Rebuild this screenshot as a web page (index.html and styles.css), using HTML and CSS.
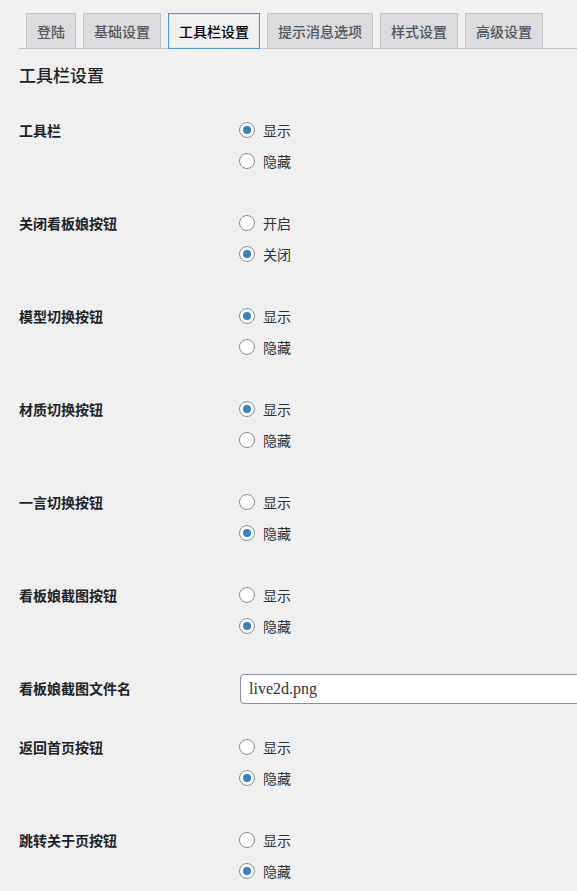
FILE: index.html
```html
<!DOCTYPE html>
<html lang="zh-CN">
<head>
    <meta charset="UTF-8">
    <meta name="viewport" content="width=device-width, initial-scale=1.0">
    <title>工具栏设置</title>
    <link rel="stylesheet" href="styles.css">
</head>
<body>
    <div class="wrap">
        <nav class="nav-tabs">
            <a href="#" class="nav-tab">登陆</a>
            <a href="#" class="nav-tab">基础设置</a>
            <a href="#" class="nav-tab nav-tab-active">工具栏设置</a>
            <a href="#" class="nav-tab">提示消息选项</a>
            <a href="#" class="nav-tab">样式设置</a>
            <a href="#" class="nav-tab">高级设置</a>
        </nav>

        <h2 class="section-title">工具栏设置</h2>

        <form action="#" method="post" class="settings">
            <div class="row">
                <div class="row-label">工具栏</div>
                <div class="row-field">
                    <label class="option"><input type="radio" name="toolbar" checked><span>显示</span></label>
                    <label class="option"><input type="radio" name="toolbar"><span>隐藏</span></label>
                </div>
            </div>

            <div class="row">
                <div class="row-label">关闭看板娘按钮</div>
                <div class="row-field">
                    <label class="option"><input type="radio" name="close_btn"><span>开启</span></label>
                    <label class="option"><input type="radio" name="close_btn" checked><span>关闭</span></label>
                </div>
            </div>

            <div class="row">
                <div class="row-label">模型切换按钮</div>
                <div class="row-field">
                    <label class="option"><input type="radio" name="model_btn" checked><span>显示</span></label>
                    <label class="option"><input type="radio" name="model_btn"><span>隐藏</span></label>
                </div>
            </div>

            <div class="row">
                <div class="row-label">材质切换按钮</div>
                <div class="row-field">
                    <label class="option"><input type="radio" name="texture_btn" checked><span>显示</span></label>
                    <label class="option"><input type="radio" name="texture_btn"><span>隐藏</span></label>
                </div>
            </div>

            <div class="row">
                <div class="row-label">一言切换按钮</div>
                <div class="row-field">
                    <label class="option"><input type="radio" name="hitokoto_btn"><span>显示</span></label>
                    <label class="option"><input type="radio" name="hitokoto_btn" checked><span>隐藏</span></label>
                </div>
            </div>

            <div class="row">
                <div class="row-label">看板娘截图按钮</div>
                <div class="row-field">
                    <label class="option"><input type="radio" name="photo_btn"><span>显示</span></label>
                    <label class="option"><input type="radio" name="photo_btn" checked><span>隐藏</span></label>
                </div>
            </div>

            <div class="row">
                <div class="row-label">看板娘截图文件名</div>
                <div class="row-field row-field-text">
                    <input type="text" name="photo_name" class="regular-text" value="live2d.png">
                </div>
            </div>

            <div class="row">
                <div class="row-label">返回首页按钮</div>
                <div class="row-field">
                    <label class="option"><input type="radio" name="home_btn"><span>显示</span></label>
                    <label class="option"><input type="radio" name="home_btn" checked><span>隐藏</span></label>
                </div>
            </div>

            <div class="row">
                <div class="row-label">跳转关于页按钮</div>
                <div class="row-field">
                    <label class="option"><input type="radio" name="about_btn"><span>显示</span></label>
                    <label class="option"><input type="radio" name="about_btn" checked><span>隐藏</span></label>
                </div>
            </div>
        </form>
    </div>
</body>
</html>
```

FILE: styles.css
```css
html {
    overflow: hidden;
}

body {
    margin: 0;
    background: #f0f0f1;
    color: #1d2327;
    font-family: "Noto Sans CJK SC", "Noto Sans", sans-serif;
    font-size: 14px;
}

.wrap {
    padding: 13px 0 0 19px;
}

.nav-tabs {
    display: flex;
    border-bottom: 1px solid #c3c4c7;
}

.nav-tab {
    margin-left: 7px;
    margin-bottom: -1px;
    padding: 5px 10px;
    line-height: 24px;
    font-size: 14px;
    font-weight: 500;
    color: #50575e;
    text-decoration: none;
    background: #dcdcde;
    border: 1px solid #c3c4c7;
}

.nav-tab-active {
    background: #f0f0f1;
    color: #000;
    border-color: #4f94d4;
    box-shadow: inset 0 0 0 1px #dbe8f4;
}

.section-title {
    margin: 14px 0 0;
    font-size: 17px;
    line-height: 24px;
    font-weight: 500;
    color: #1d2327;
}

.settings {
    margin-top: 12px;
}

.row {
    display: flex;
    align-items: flex-start;
}

.row-label {
    width: 220px;
    flex-shrink: 0;
    padding-top: 21px;
    line-height: 20px;
    font-weight: 600;
    color: #1d2327;
}

.row-field {
    display: flex;
    flex-direction: column;
    gap: 11px;
    padding: 21px 0;
}

.row-field-text {
    padding: 17px 0 12px;
}

.option {
    display: flex;
    align-items: center;
    gap: 8px;
    height: 20px;
    line-height: 20px;
    color: #2c3338;
}

.option input[type="radio"] {
    appearance: none;
    margin: 0;
    width: 16px;
    height: 16px;
    border: 1px solid #8c8f94;
    border-radius: 50%;
    background: #fff;
    display: flex;
    align-items: center;
    justify-content: center;
}

.option input[type="radio"]:checked::before {
    content: "";
    width: 8px;
    height: 8px;
    border-radius: 50%;
    background: #3582c4;
}

.regular-text {
    box-sizing: border-box;
    width: 350px;
    height: 30px;
    margin: 0 0 0 1px;
    padding: 0 8px;
    border: 1px solid #8c8f94;
    border-radius: 4px;
    background: #fff;
    color: #2c3338;
    font-family: "Liberation Serif", serif;
    font-size: 16px;
}
```
